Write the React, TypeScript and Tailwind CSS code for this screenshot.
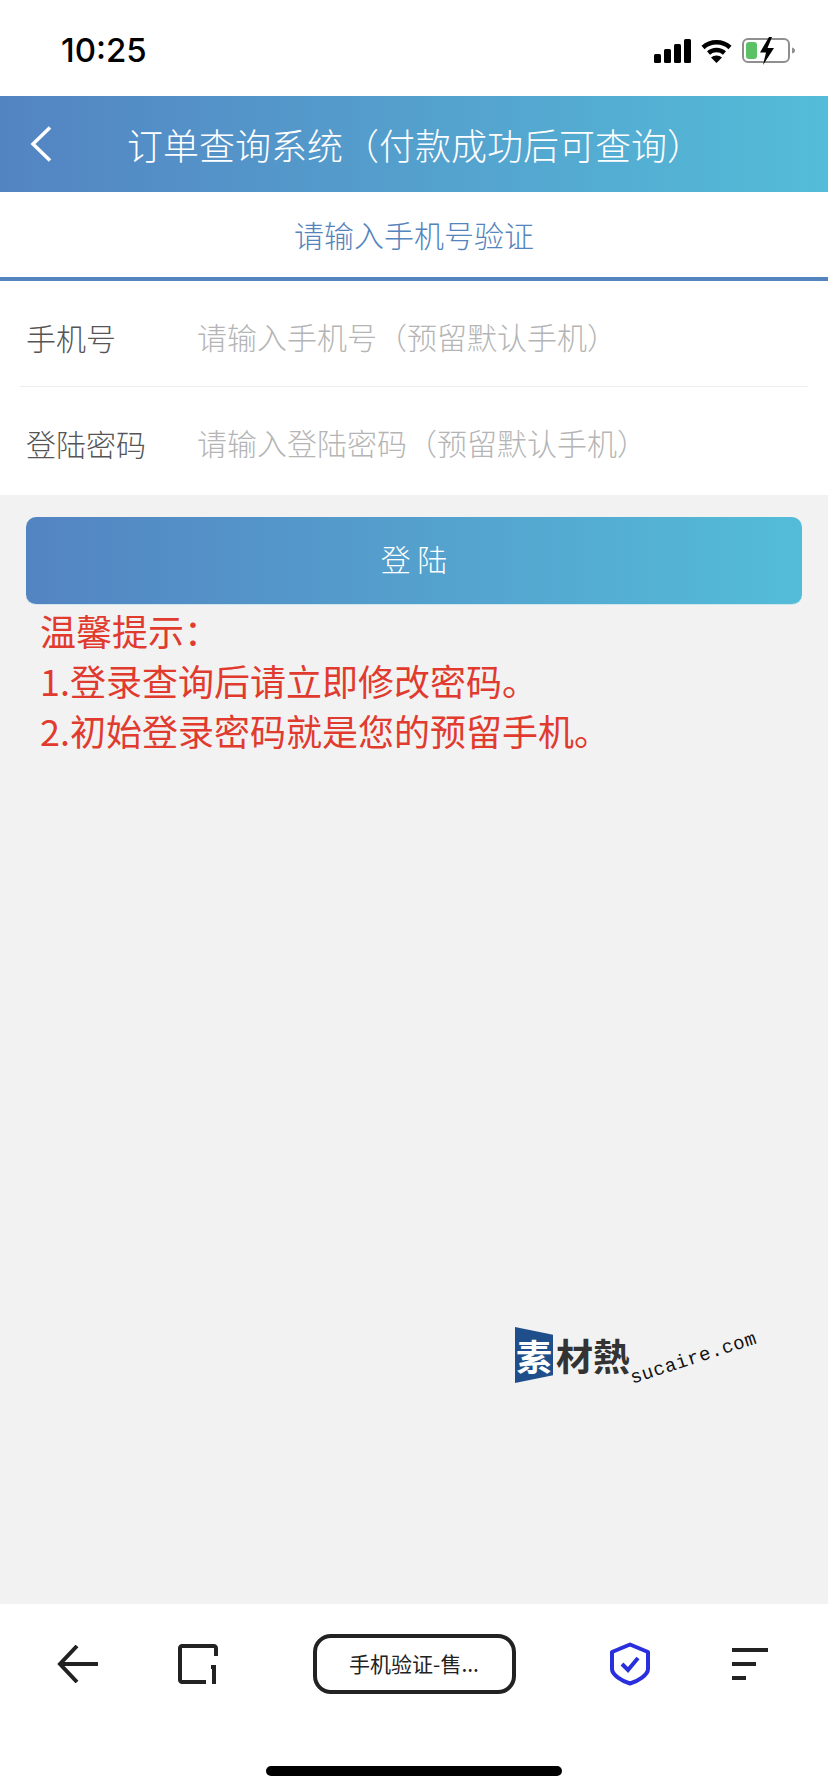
const cjk = "font-['Noto_Sans_CJK_SC','Liberation_Sans',sans-serif]";

function StatusIcons() {
  return (
    <div className="flex items-center">
      <svg width="37" height="24" viewBox="0 0 37 24" fill="#000">
        <rect x="0" y="15" width="7" height="9" rx="1.5" />
        <rect x="10" y="10" width="7" height="14" rx="1.5" />
        <rect x="20" y="5" width="7" height="19" rx="1.5" />
        <rect x="30" y="0" width="7" height="24" rx="1.5" />
      </svg>
      <svg className="ml-[10px]" width="31" height="24" viewBox="0 0 31 24" fill="none">
        <path d="M2 8.5C9.5 1.5 21.5 1.5 29 8.5" stroke="#000" strokeWidth="4.5" />
        <path d="M7.5 14C12 10 19 10 23.5 14" stroke="#000" strokeWidth="4.5" />
        <path d="M15.5 24L10 18.5C13 15.8 18 15.8 21 18.5Z" fill="#000" />
      </svg>
      <svg className="ml-[10px]" width="55" height="28" viewBox="0 0 55 28" fill="none">
        <rect x="1" y="2" width="46" height="23" rx="5" stroke="#8f8f8f" strokeWidth="2" />
        <rect x="4" y="5" width="11" height="17" rx="3" fill="#5cc165" />
        <path d="M50 10.5C52 11 53 12 53 13.5C53 15 52 16 50 16.5Z" fill="#8f8f8f" />
        <path d="M27 0L18 15.5H24L21 28L32 11H25.5L30 0Z" fill="#000" />
      </svg>
    </div>
  );
}

function FormRow({ label, hint, line }: { label: string; hint: string; line?: boolean }) {
  return (
    <div className={`flex items-center pl-[6px] ${line ? "h-[106px] border-b border-[#ececec] pt-[8px]" : "h-[108px] pt-[4px]"}`}>
      <span className="w-[171px] text-[#555] text-[30px] font-light">{label}</span>
      <span className="pb-[2px] text-[#b5b5b5] text-[30px] font-light">{hint}</span>
    </div>
  );
}

function Logo() {
  return (
    <div className="absolute left-[515px] top-[1327px] flex h-[56px] items-center">
      <div className="flex h-[56px] w-[38px] items-center justify-center bg-[#1f4f8a] [clip-path:polygon(0_0,100%_14%,100%_86%,0_100%)]">
        <span className="text-white text-[36px] font-bold leading-none">素</span>
      </div>
      <span className="ml-[3px] text-[#333] text-[37px] font-bold leading-none">材熱</span>
      <span className="absolute left-[116px] top-[43px] origin-left -rotate-[18deg] whitespace-nowrap font-['Liberation_Mono',monospace] text-[19px] tracking-[0.6px] text-[#111] leading-none">
        sucaire.com
      </span>
    </div>
  );
}

export default function App() {
  return (
    <div className={`relative flex h-screen w-full flex-col bg-[#f2f2f3] ${cjk}`}>
      <div className="flex h-[96px] items-center justify-between bg-white pl-[61px] pr-[31px] pt-[5px]">
        <span className="font-['Inter',sans-serif] text-[33px] font-medium text-black">10:25</span>
        <StatusIcons />
      </div>

      <div className="flex h-[96px] items-center bg-gradient-to-r from-[#5384c2] to-[#53bcd8]">
        <svg className="ml-[30px]" width="22" height="36" viewBox="0 0 22 36" fill="none">
          <path d="M20 1.5L3 18L20 34.5" stroke="#fff" strokeWidth="3.5" />
        </svg>
        <span className="ml-[75px] text-white text-[36px] font-light whitespace-nowrap">订单查询系统（付款成功后可查询）</span>
      </div>

      <div className="flex h-[89px] items-center justify-center border-b-4 border-[#5384bd] bg-white text-[#5384bd] text-[30px] font-light">
        请输入手机号验证
      </div>

      <div className="bg-white px-[20px]">
        <FormRow label="手机号" hint="请输入手机号（预留默认手机）" line />
        <FormRow label="登陆密码" hint="请输入登陆密码（预留默认手机）" />
      </div>

      <div className="flex-1 px-[26px] pt-[22px]">
        <button className="flex h-[88px] w-[776px] items-center justify-center rounded-[10px] border-b border-[#cfe6ee] bg-gradient-to-r from-[#5384c2] to-[#53bcd8] pb-[4px] text-white text-[30px] font-light">
          登 陆
        </button>
        <div className="pl-[14px] text-[#e03b2e] text-[36px] leading-[50px]">
          <p>温馨提示：</p>
          <p>1.登录查询后请立即修改密码。</p>
          <p>2.初始登录密码就是您的预留手机。</p>
        </div>
      </div>

      <Logo />

      <div className="h-[188px] bg-white px-[18px] pt-[30px]">
        <div className="grid grid-cols-[120px_120px_1fr_120px_120px] items-center">
          <div className="flex justify-center">
            <svg width="42" height="38" viewBox="0 0 42 38" fill="none">
              <path d="M20 1L3 19L20 37M3 19H41" stroke="#222" strokeWidth="4" />
            </svg>
          </div>
          <div className="flex justify-center">
            <svg width="40" height="40" viewBox="0 0 40 40" fill="none">
              <path d="M28 38H4C3 38 2 37 2 36V4C2 3 3 2 4 2H36C37 2 38 3 38 4V12" stroke="#222" strokeWidth="4" />
              <path d="M33 23H36V40" stroke="#222" strokeWidth="4" />
            </svg>
          </div>
          <div className="flex justify-center">
            <div className="flex h-[60px] w-[203px] items-center justify-center rounded-[18px] border-4 border-[#222] text-[#222] text-[21px]">
              手机验证-售...
            </div>
          </div>
          <div className="flex justify-center">
            <svg width="42" height="44" viewBox="0 0 42 44" fill="none">
              <path d="M21 2.5L39 10V27C39 33 29 39 21 41.5C13 39 3 33 3 27V10Z" stroke="#2a2fdd" strokeWidth="4" strokeLinejoin="round" />
              <path d="M13 22L19 28L29 16" stroke="#2a2fdd" strokeWidth="4" />
            </svg>
          </div>
          <div className="flex justify-center">
            <svg width="36" height="32" viewBox="0 0 36 32" fill="#222">
              <rect x="0" y="0" width="36" height="4" />
              <rect x="0" y="14" width="24" height="4" />
              <rect x="0" y="28" width="14" height="4" />
            </svg>
          </div>
        </div>
        <div className="mx-auto mt-[72px] h-[10px] w-[296px] rounded-full bg-black" />
      </div>
    </div>
  );
}
